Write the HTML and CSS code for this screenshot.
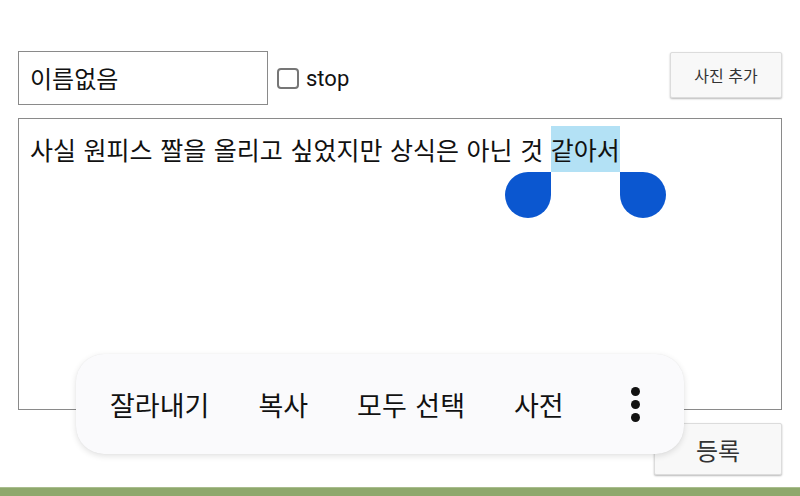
FILE: index.html
```html
<!DOCTYPE html>
<html lang="ko">
<head>
<meta charset="utf-8">
<title>글쓰기</title>
<link rel="stylesheet" href="styles.css">
</head>
<body>
<div class="page">
  <div class="top-row">
    <div class="name-field">이름없음</div>
    <label class="stop-check"><span class="box"></span><span class="stop-label">stop</span></label>
    <button class="btn btn-photo" type="button">사진 추가</button>
  </div>
  <div class="editor">
    <p class="editor-text">사실 원피스 짤을 올리고 싶었지만 상식은 아닌 것 <span class="sel">같아서<span class="handle handle-start"></span><span class="handle handle-end"></span></span></p>
  </div>
  <div class="submit-row">
    <button class="btn btn-submit" type="button">등록</button>
  </div>
</div>
<div class="footer-bar"></div>

<div class="text-menu">
  <span class="menu-item">잘라내기</span>
  <span class="menu-item">복사</span>
  <span class="menu-item">모두 선택</span>
  <span class="menu-item">사전</span>
  <span class="menu-more"><i></i><i></i><i></i></span>
</div>
</body>
</html>
```

FILE: styles.css
```css
* { box-sizing: border-box; }

html, body {
  margin: 0;
  background: #fff;
  font-family: "Noto Sans CJK KR", "Noto Sans", sans-serif;
  color: #111;
}

body {
  position: relative;
  width: 800px;
  height: 496px;
  overflow: hidden;
}

.page {
  padding: 51px 18px 0 18px;
}

/* name, checkbox, photo button */
.top-row {
  display: flex;
  align-items: flex-start;
}

.name-field {
  width: 250px;
  height: 54px;
  border: 1px solid #8a8a8a;
  padding: 0 11px;
  font-size: 24px;
  line-height: 52px;
  color: #111;
}

.stop-check {
  display: flex;
  align-items: center;
  margin-left: 9px;
  height: 54px;
}

.box {
  width: 22px;
  height: 21px;
  border: 2px solid #767676;
  border-radius: 4px;
  background: #fff;
}

.stop-label {
  margin-left: 7px;
  font-family: Roboto, "Noto Sans", sans-serif;
  font-size: 22px;
  color: #111;
}

.btn {
  font-family: "Noto Sans CJK KR", sans-serif;
  background: #f8f8f8;
  border: 1px solid #dcdcdc;
  border-radius: 2px;
  box-shadow: 0 1px 2px rgba(0, 0, 0, 0.28);
  color: #333;
  padding: 0;
}

.btn-photo {
  margin-left: auto;
  margin-top: 1px;
  width: 112px;
  height: 46px;
  font-size: 16px;
}

/* text area */
.editor {
  margin-top: 13px;
  height: 292px;
  border: 1px solid #8a8a8a;
  padding: 7px 11px;
}

.editor-text {
  margin: 0;
  font-size: 25px;
  line-height: 46px;
  word-spacing: 0.6px;
  color: #111;
}

.sel {
  position: relative;
  display: inline-block;
  background: #b3e1f5;
}

.handle {
  position: absolute;
  top: 46px;
  width: 46px;
  height: 46px;
  background: #0b57d0;
}

.handle-start {
  right: 100%;
  border-radius: 50% 0 50% 50%;
}

.handle-end {
  left: 100%;
  border-radius: 0 50% 50% 50%;
}

/* submit */
.submit-row {
  display: flex;
  justify-content: flex-end;
  margin-top: 13px;
}

.btn-submit {
  width: 128px;
  height: 52px;
  font-size: 24px;
}

.footer-bar {
  position: absolute;
  left: 0;
  right: 0;
  bottom: 0;
  height: 9px;
  background: #8ea86c;
  border-top: 1px solid #a9bd8e;
}

/* floating text selection menu */
.text-menu {
  position: absolute;
  left: 76px;
  top: 354px;
  width: 608px;
  height: 100px;
  border-radius: 28px;
  background: #fafafc;
  box-shadow: 0 2px 6px rgba(0, 0, 0, 0.12), 0 0 1px rgba(0, 0, 0, 0.08);
  display: flex;
  align-items: center;
  padding: 0 34px 0 34px;
  gap: 49px;
}

.menu-item {
  font-size: 27px;
  word-spacing: 1px;
  color: #111;
}

.menu-more {
  margin-left: auto;
  display: flex;
  flex-direction: column;
  gap: 4px;
  margin-right: 10px;
}

.menu-more i {
  display: block;
  width: 9px;
  height: 9px;
  border-radius: 50%;
  background: #111;
}
```
